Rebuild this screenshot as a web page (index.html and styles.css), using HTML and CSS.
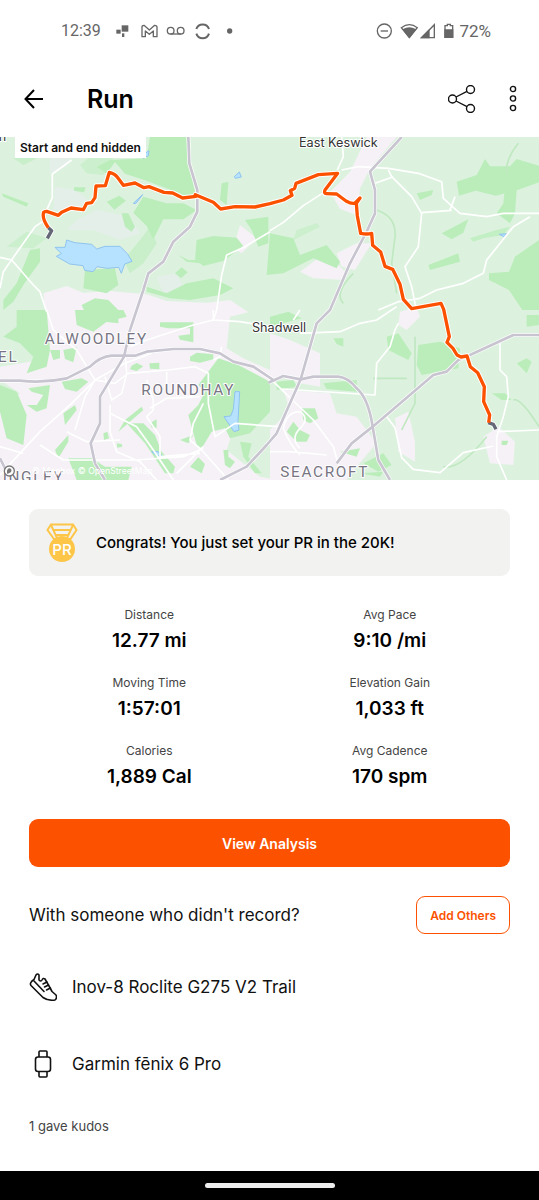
FILE: index.html
```html
<!DOCTYPE html>
<html lang="en">
<head>
    <meta charset="UTF-8">
    <meta name="viewport" content="width=device-width, initial-scale=1.0">
    <title>Run</title>
    <link rel="stylesheet" href="styles.css">
</head>
<body>
    <div class="status">
        <span class="time">12:39</span>
        <svg class="notices" width="120" height="18" viewBox="0 0 360 54" fill="none" stroke="#666" stroke-width="4">
            <g fill="#666" stroke="none">
                <rect x="20" y="10" width="20" height="19"/>
                <rect x="4" y="23" width="13" height="12"/>
                <rect x="21" y="34" width="7" height="11"/>
                <circle cx="344" cy="27" r="8"/>
            </g>
            <path d="M81 44V15q0-5 6-5l16 14 16-14q7 0 7 6v28h-11V27l-12 10-12-10v17z" stroke-linejoin="round"/>
            <circle cx="167" cy="26" r="10"/>
            <circle cx="197" cy="26" r="10"/>
            <path d="M167 36h30"/>
            <path d="M244 21a20 20 0 0 1 38 0M244 35a20 20 0 0 0 38 0" stroke-width="6"/>
        </svg>
        <svg class="signals" width="80" height="18" viewBox="0 0 240 54" fill="none" stroke="#666" stroke-width="4">
            <circle cx="25" cy="27" r="21"/>
            <path d="M14 27h22"/>
            <path d="M76 17q24-18 48 0L100 46z"/>
            <path d="M82 23q18-10 36 0L100 46z" fill="#666"/>
            <path d="M137 47h38V8z"/>
            <path d="M137 47h22V25z" fill="#666"/>
            <path d="M207 11v35h23V11h-7V7h-9v4z"/>
            <path d="M207 24h23v22h-23z" fill="#666"/>
        </svg>
        <span>72%</span>
    </div>

    <header class="header">
        <button class="icon-btn" aria-label="Back">
            <svg width="20" height="20" viewBox="0 0 20 20" fill="none" stroke="#000" stroke-width="2"><path d="M19 10H2M10 1L1.500 10l8.500 9"/></svg>
        </button>
        <h1>Run</h1>
        <button class="icon-btn share" aria-label="Share">
            <svg width="28" height="28" viewBox="0 0 28 28" fill="none" stroke="#111" stroke-width="1.400"><circle cx="4.500" cy="14" r="4"/><circle cx="22.500" cy="4.500" r="4"/><circle cx="22.500" cy="23.500" r="4"/><path d="M8 12l11-5.600M8 16l11 5.600"/></svg>
        </button>
        <button class="icon-btn" aria-label="More">
            <svg width="8" height="28" viewBox="0 0 8 28" fill="none" stroke="#111" stroke-width="1.400"><circle cx="4" cy="4" r="2.600"/><circle cx="4" cy="13.500" r="2.600"/><circle cx="4" cy="23" r="2.600"/></svg>
        </button>
    </header>

    <div class="map">
        <svg viewBox="0 21 1617 1029">
            <defs>
                <g id="main-roads">
                    <path d="M565 21l3 79 24 80v65l-22 45-50 45-30 60-45 35-15 50-20 60-20 60-18 80-72 120v80l-28 60 13 60 30 50"/>
                    <path d="M0 752h60q70 8 140-7l70-35q30-30 65-33h70l35-12 80-8h80l60 13 40 25 60 15 60 40"/>
                    <path d="M1205 21l-95 104 15 55v70l-25 55-50 95-60 140-40 40-48 168-72 162-30 35-60 65-80 40"/>
                    <path d="M805 758l45-20 52 10 38-8h75q30 3 55 35 35 30 48 115l17 100 35 60"/>
                    <path d="M1010 1000l45-60 63-50 182-155 40-10 35-35 35-15 130-60h77M0 985l20 40"/>
                </g>
                <path id="route" d="M145 293q-20-28-14-46 4-3 9-3l35 12 10-9 28-13 37 5 10-19 15-2 10-15 3-35 28-1 12-40q17 4 26 17l16 22 35-7 27 14 15-3 45 17 26 2 30 15 40-5-2-5 54 23 22 20 43-7 60 1 45-10 40-11 26-14-5-14 13-7 4-15 67-26 58-4-38 50q-4 11 4 11l31 1 28 21q22 12 29 4l13-13-11 16 3 38 10 52q20 4 33 0l3 36 24 20 13 43 23 9 22 45 10 45 25 28 88-16 8 18 17 82-7 17 18 18 12 20 12 6 18-3 10 32 22 18 20 42-2 45 18 40-3 23"/>
            </defs>
            <rect y="21" width="1617" height="1029" fill="#dcf2de"/>
            <!-- towns -->
            <g fill="#f5f1f6">
                <path d="M130 490l70-22 50 20 80-5 110 10 60 20 120 5 70-8 60 40 60 60 60 20 90 40v100l-60-10-60-20-100 40-60 180 100 80 110 20 30 90H0V850l60-60L0 750v-40l120-20 20-90z"/>
                <path d="M900 425l60-45 50 20 30 30-10 20-90-5z"/>
                <path d="M1010 370l60-30 45 0-50 80-40-10z"/>
                <path d="M1100 21h90l-80 95-30 60-10 80-50-20-30-50 60-60z"/>
                <path d="M850 780l140 10 20 60 60 10 60 80-60 70-30 40H810V900l60-60z"/>
                <path d="M1185 865l40-20 20 90 0 60-50-30z"/>
                <path d="M1450 920l45-30 50 45-5 70-70-5z"/>
                <path d="M1200 545l50-15 10 30-40 40-25-15z"/>
                <path d="M720 285l50 40-45 45-25-15z"/>
            </g>
            <g fill="#e4efe9">
                <path d="M165 170l60 10 40 30-40 30-65 0z"/>
                <path d="M230 270l60-30 100 20 30 50-60 20-80-30-80 0z"/>
                <path d="M150 40l80-10-30 80-50 20z"/>
                <path d="M470 440l60-10 20 40-60 20z"/>
            </g>
            <path d="M0 555l100-10 40 30 0 50-60 70-80-10zM690 560l120-30 0 190-80-35-50-30z" fill="#dcf2de"/>
            <!-- woods and parks -->
            <g fill="#bbedbb">
                <path d="M330 90l110-5 10-64h115v75l20 90-20 20-50-25-80-30-60-20-30-35-25 35-30-20z"/>
                <path d="M240 105l60-50 40 30-30 50-50-5z" opacity=".5"/>
                <path d="M430 200l70 20 50 0 40 20-40 28-60 0-30 60-20-40-40-40z"/>
                <path d="M320 215l38-18 20 15-35 27z"/>
                <path d="M365 250l20 0 20 40-10 15-20-15z"/>
                <path d="M420 330l30-40 20 50-40 60-40 30-20-40z" opacity=".6"/>
                <path d="M590 330l50-12 70 5 20 25-60 45-60 15-25-20z"/>
                <path d="M735 270l70-10v80l-30 10-20-50z"/>
                <path d="M665 160l20-5-5 70-20-15z"/>
                <path d="M5 190l80 30-5 10-70-30z"/>
                <path d="M40 85l80-20 10 10-60 30z" opacity=".6"/>
                <path d="M222 172l35 0-5 15-30-5z"/>
                <path d="M90 360l30-5 0 40-50 70-30 50-30 25 0-30 40-50z"/>
                <path d="M20 350l60-45 60 20-40 30z" opacity=".5"/>
                <path d="M255 420l90-5 10 50-35 25-70-15z"/>
                <path d="M245 525l40-20 40 5 30 30v40l-90-10z"/>
                <path d="M440 470l60 20 60-30 80-15 60 30-40 20-90 15-60-5-70-20z"/>
                <path d="M525 430l20-18 18 15-20 18z"/>
                <path d="M535 375l30 15h40l-5 10-40-5z"/>
                <path d="M50 540l90 0 10 120-10 50-60 20 20-50-40-40-50-20 40-30z"/>
                <path d="M225 540h145l10 20-60 15-40 30-50-20z"/>
                <path d="M190 660l40-8-10 45-25-10zM150 660l30 0 0 25-20 5z"/>
                <path d="M480 577h100v60l-40-8-5-12 35-4 0-18-65 0-25-5z"/>
                <path d="M395 707l15-8 20 10-20 14-20-5zM448 700l30-2 0 20-28-2z"/>
                <path d="M570 680l20-12 50 5 0 15-40 10-30-5z"/>
                <path d="M0 765l50 20 30 70-10 90-50-20-20-80z"/>
                <path d="M85 775l65-10-10 70-30 10-30-20 30 0 20-30-35-10z"/>
                <path d="M185 755l60-10 20 10-35 30-35-8z"/>
                <path d="M190 850l35-25 5 15-35 45z"/>
                <path d="M165 960l40-45 0 20-30 50zM205 985l70 0 40 25 80 0-10 40H230z"/>
                <path d="M375 870l50-40 5 10-75 65z"/>
                <path d="M380 880l50 0 35 35 20 50 40 45-5 20-25 0-60-90z"/>
                <path d="M310 910l12-5 5 20-15 5zM350 940l15 2 2 8-15 3zM450 880l20-12 0 25-15 0z"/>
                <path d="M655 685l60 20 95 50v90l-60 65-60 15-15-30-40 10-30 50-15-10-25-90 30-30 20-40-20-20z"/>
                <path d="M570 1010l25-28 20 20-10 28zM540 930l40-15-15 25zM720 935l35 5-10 40 40 50h-20l-35-50z"/>
                <path d="M670 960l15 0 0 20 20 15-15 20-15-10z"/>
                <path d="M810 310l70 15 20 50 80-30 40 50-10 20-70-30-90 45-50 5z"/>
                <path d="M890 300l60-20 10 10-80 40z" opacity=".5"/>
                <path d="M1370 155l60-20 25-48 15 22 60 0 20-22 67 20v50l-70 25-60 15-60-15-50 15z"/>
                <path d="M1515 170l35 10-5 70-15 30-40-30 20-30z"/>
                <path d="M1250 190l50-10-5 15-35 15zM1325 310l80-42-15 40-35 20z"/>
                <path d="M1285 405l90-35 5 25-90 25z"/>
                <path d="M1410 325l80-25 40-10-20 25-60 10-30 10z" opacity=".8"/>
                <path d="M1545 380l72-50v210l-50 0-40-60-60-30 0-20 60-5z"/>
                <path d="M1255 645l65-10 60 20-5 60-110 20-15-30z"/>
                <path d="M1160 620l35-10 40 60-10 20-60-30z"/>
                <path d="M810 560l55-15 40 20-95 25z"/>
                <path d="M1000 625l30 0 0 25-20-8zM830 755l50-5 10 20-60 10zM970 760l100-10 0 35-90-8z"/>
                <path d="M905 835l40 0 10 30-25 15-20-10zM860 905l20-30 20 25 30 15-10 20-30 0z"/>
                <path d="M1090 1000l60-30 25 35-40 20zM1020 965l60-10-10 25zM1080 1030l70-5-10 15z"/>
                <path d="M1475 790l40 0 20 20-30 0zM1550 700l30-15 15 10-15 35zM1505 932l20 0-5 13-15 0z"/>
                <path d="M1580 555h37v30l-37 5z"/>
            </g>
            <path d="M1130 240q60 20 55 80l-10 80 15 90M1245 620v200l-40 80M1555 40q-40 50-35 90M1060 430q-60 60-30 90M1120 745h100M1540 810q20-10 77 80M1460 920q-80 100-130 90" fill="none" stroke="#c0e8c1" stroke-width="5"/>
            <!-- lakes -->
            <g fill="#b7e2ff" stroke="#8fc4ee" stroke-width="3">
                <path d="M165 352l30 0 5-22 25 8 50 5 15 14 25-8h45l22 22 14 23-22 8-10 28-8-18-35 3-30-5-12 15-25-4-5-14-40-5-40-23 15-8z"/>
                <path d="M705 785l14 0-5 90 3 25-15 5-30-45 20-2 8-20z"/>
                <path d="M455 965l20 0 12 15-18-4zM703 140l15-14 6 15-18 4zM400 220l28-26-20 26zM1498 313l22-2-8 9z"/>
                <path d="M430 85l15-8 2-15-15 10z"/>
            </g>
            <!-- minor roads -->
            <g fill="none" stroke="#fff" stroke-width="5" stroke-linejoin="round">
                <path d="M215 90l-58 42 0 70-20 45M135 270l-30 20-60 85-35 50-10 50M0 382l35 8 65 75 20 20 20 60"/>
                <path d="M810 305l-75 45-55 25-15 60-15 105-10 30-60 15-140 45-50 20"/>
                <path d="M810 302l40-25 60-50 70-45M1025 120l50-10 90 5 90 15 70 25 5 50 50 45 80 10 50-10h107M1165 120l10 20 60 60 30 50-10 100-40 60 20 60 12 60M1350 240l15-40M1265 248l90-7M1125 160l55-20M1590 260l-50 30-80 100-10 40-60 30-80 20-50 25-65 10-60 25M1012 120l18-40-5-59"/>
                <path d="M1195 580l-10 20-15 50-40 50-5 95-280-18M1190 530l-60 40-50 10-60 25-120 5M1500 640v80l20 20 5 60-15 60-20 60 0 60 30 70M1490 905l127-5M1480 948l-90 20-70 60-80-10-35-35-20-90-30-40M900 540l-20 30"/>
                <path d="M640 540l0 30 80 5 90 15M285 750l90-50 80-30M140 540l20 60 70 60 55 90-70 70-95 85-120 130M285 750l60 10 40-30 120-10 80-10 40 20 0 90 20 100 60-40 130 10"/>
                <path d="M120 945l70 45h220l140-10 60-25M0 950l70 20M330 825l0 80 20 60 70 30 50 55M330 850l80 40 50 70 60 90M440 750l20 60 0 30-20 20 40 60 0 60 120-10M600 800l-100 5-50 30M610 820l-30 60-10 50 35 30 80 90M610 950l-80 80M375 670l5 60-15 60-30 20-20-70M200 905l60 30 100-5M640 690l20-10 5-30M225 900l30-100 30-50M500 725l0 70"/>
                <path d="M820 755l120 115 60 80 20 70M810 965h60l110 10M900 975q-30-30-50-80 10-50 50-50 30 20 0 50-30 30 0 60"/>
            </g>
            <!-- major roads -->
            <g fill="none" stroke-linejoin="round">
                <use href="#main-roads" stroke="#fff" stroke-width="12"/>
                <use href="#main-roads" stroke="#c8c5d0" stroke-width="8"/>
            </g>
            <!-- place names -->
            <g stroke="#fff" stroke-width="6" stroke-linejoin="round" paint-order="stroke">
                <text class="village" x="897" y="52">East Keswick</text>
                <text class="village" x="756" y="607">Shadwell</text>
                <text class="district" x="134" y="643">ALWOODLEY</text>
                <text class="district" x="424" y="796">ROUNDHAY</text>
                <text class="district" x="841" y="1041">SEACROFT</text>
                <text class="district" x="-6" y="696">EL</text>
                <text class="district" x="8" y="1056">INGLEY</text>
                <text class="village" x="-4" y="32">n</text>
            </g>
            <text class="credit" x="96" y="1032">© Mapbox © OpenStreetMap</text>
            <circle cx="28" cy="1023" r="15" fill="#fff" stroke="#777" stroke-width="4"/>
            <path d="M21 1031v-9q2-8 9-7 7 4 3 11-5 5-12 5z" fill="#777"/>
            <!-- route, grey where the ends are hidden -->
            <g fill="none" stroke-linejoin="round">
                <use href="#route" stroke="#fff" stroke-width="16"/>
                <path d="M142 325l13-23-10-9M1465 878l15 5 8 15" stroke="#fff" stroke-width="15"/>
                <path d="M142 325l13-23-10-9M1465 878l15 5 8 15" stroke="#646775" stroke-width="10"/>
                <use href="#route" stroke="#fc5200" stroke-width="10"/>
            </g>
        </svg>
        <span class="hidden-tag">Start and end hidden</span>
    </div>

    <main>
        <section class="congrats">
            <svg width="32" height="40" viewBox="0 0 32 40">
                <path d="M5 1.500h22l3.500 5.500-6 9H8L1.500 7z" fill="none" stroke="#fdc649" stroke-width="2"/>
                <path d="M5 2l6 13M27 2l-6 13M8 7h16M10 12h12" fill="none" stroke="#fdc649" stroke-width="2"/>
                <circle cx="16" cy="26" r="13" fill="#fdc649"/>
                <text class="pr" x="16" y="32" text-anchor="middle">PR</text>
            </svg>
            <p>Congrats! You just set your PR in the 20K!</p>
        </section>

        <dl class="stats">
            <div><dt>Distance</dt><dd>12.77 mi</dd></div>
            <div><dt>Avg Pace</dt><dd>9:10 /mi</dd></div>
            <div><dt>Moving Time</dt><dd>1:57:01</dd></div>
            <div><dt>Elevation Gain</dt><dd>1,033 ft</dd></div>
            <div><dt>Calories</dt><dd>1,889 Cal</dd></div>
            <div><dt>Avg Cadence</dt><dd>170 spm</dd></div>
        </dl>

        <button class="analysis">View Analysis</button>

        <div class="others">
            <p>With someone who didn't record?</p>
            <button class="add">Add Others</button>
        </div>

        <ul class="gear">
            <li>
                <svg width="28" height="28" viewBox="0 0 28 28" fill="none" stroke="#111" stroke-width="1.600" stroke-linejoin="round" stroke-linecap="round">
                    <path d="M5 6.500L7 2q1.500-2 3 0v5q2 2 3 0 1-2.500 3-1l4 7 3 5.500 4 3.500q1.500 3-1 5-7 1-12-2.500L2 12.500Q0 10 5 6.500z"/>
                    <path d="M5 8l10 10.500M14 11l4-2M15.500 14l4-2M17.500 17l4-2"/>
                </svg>
                <span>Inov-8 Roclite G275 V2 Trail</span>
            </li>
            <li>
                <svg width="28" height="28" viewBox="0 0 28 28" fill="none" stroke="#111" stroke-width="1.600">
                    <rect x="6.500" y="7" width="15" height="14.500" rx="2.500"/>
                    <path d="M10 7V2q0-1 1-1h6q1 0 1 1v5M10 21.500V26q0 1 1 1h6q1 0 1-1v-4.500"/>
                </svg>
                <span>Garmin fēnix 6 Pro</span>
            </li>
        </ul>

        <p class="kudos">1 gave kudos</p>
    </main>

    <div class="nav"><span></span></div>
</body>
</html>
```

FILE: styles.css
```css
* {
    padding: 0;
    margin: 0;
    box-sizing: border-box;
}
body {
    display: flex;
    flex-direction: column;
    min-height: 100vh;
    background: #fff;
    color: #111;
    font-family: Inter, "Liberation Sans", sans-serif;
}
button {
    font-family: inherit;
    cursor: pointer;
}
svg {
    display: block;
    flex: none;
}

.status {
    display: flex;
    align-items: center;
    height: 61px;
    padding: 0 48px 0 61px;
    color: #666;
    font-family: Roboto, sans-serif;
    font-size: 17px;
}
.time {
    font-size: 16px;
}
.notices {
    margin-left: 14px;
}
.signals {
    margin-left: auto;
    margin-right: 3px;
}

.header {
    display: flex;
    align-items: center;
    height: 76px;
    padding: 0 22px 0 24px;
}
.icon-btn {
    border: none;
    background: none;
}
.header h1 {
    margin-left: 43px;
    font-size: 25px;
    font-weight: 600;
    color: #000;
}
.share {
    margin-left: auto;
    margin-right: 33px;
}

.map {
    position: relative;
}
.map svg {
    width: 100%;
    height: auto;
}
.village {
    font-size: 38px;
    fill: #333;
}
.district {
    font-family: Roboto, sans-serif;
    font-size: 46px;
    letter-spacing: 5px;
    fill: #777583;
}
.credit {
    font-size: 26px;
    fill: #fff;
}
.hidden-tag {
    position: absolute;
    top: 0;
    left: 15px;
    padding: 0 5px;
    background: #fff;
    font-size: 12px;
    font-weight: 600;
    line-height: 21px;
}

main {
    padding: 29px 29px 0;
}
.congrats {
    display: flex;
    align-items: center;
    gap: 18px;
    min-height: 67px;
    padding: 0 17px;
    border-radius: 9px;
    background: #f2f2f0;
    font-size: 15px;
    font-weight: 500;
    color: #000;
}
.pr {
    font-size: 15px;
    font-weight: 500;
    fill: #fff;
}

.stats {
    display: grid;
    grid-template-columns: 1fr 1fr;
    row-gap: 16px;
    margin: 29px 0 26px;
    text-align: center;
}
.stats dt {
    font-size: 12px;
    line-height: 20px;
    color: #444;
}
.stats dd {
    font-size: 19px;
    font-weight: 600;
    line-height: 32px;
    color: #000;
}

.analysis {
    display: block;
    width: 100%;
    height: 48px;
    border: none;
    border-radius: 9px;
    background: #fc5200;
    color: #fff;
    font-size: 14px;
    font-weight: 600;
}
.others {
    display: flex;
    align-items: center;
    justify-content: space-between;
    margin: 29px 0 14px;
    font-size: 17px;
}
.add {
    height: 38px;
    padding: 0 13px;
    border: 1px solid #fc5200;
    border-radius: 9px;
    background: #fff;
    color: #fc5200;
    font-size: 12px;
    font-weight: 600;
}

.gear {
    list-style: none;
}
.gear li {
    display: flex;
    align-items: center;
    gap: 15px;
    height: 77px;
    font-size: 17px;
}
.kudos {
    margin: 14px 0;
    font-size: 13px;
    line-height: 20px;
    color: #444;
}

.nav {
    display: flex;
    justify-content: center;
    align-items: center;
    height: 29px;
    margin-top: auto;
    background: #000;
}
.nav span {
    width: 130px;
    height: 5px;
    border-radius: 3px;
    background: #eee;
}
```
